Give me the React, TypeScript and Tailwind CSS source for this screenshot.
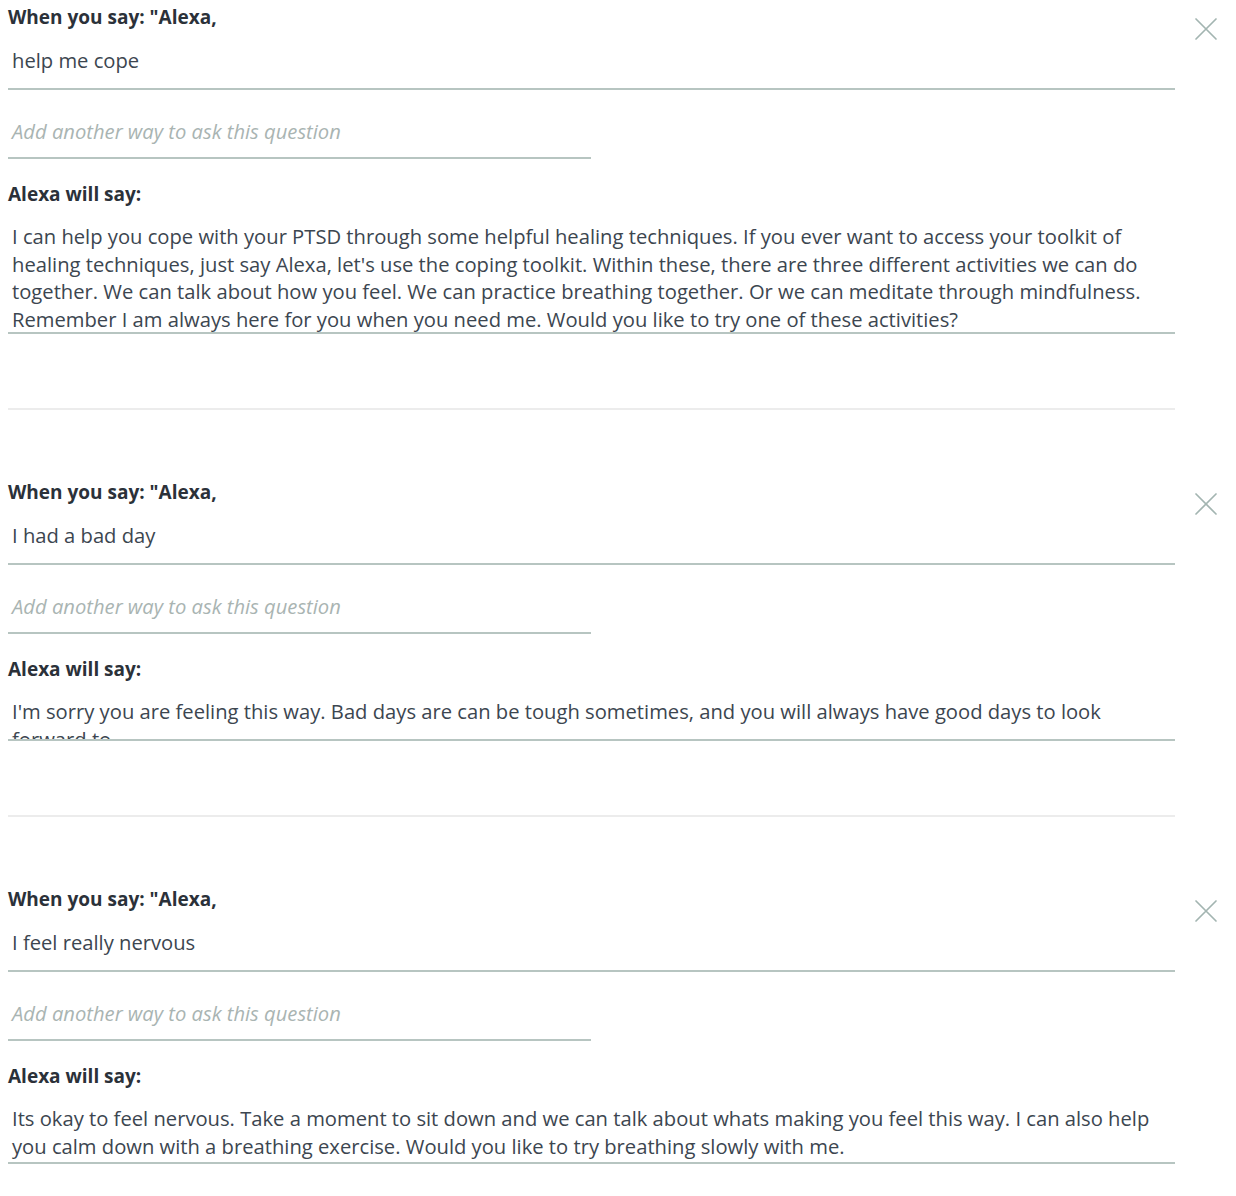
interface Phrase {
  utterance: string;
  reply: string[];
  replyHeight: string;
}

const phrases: Phrase[] = [
  {
    utterance: "help me cope",
    reply: [
      "I can help you cope with your PTSD through some helpful healing techniques. If you ever want to access your toolkit of",
      "healing techniques, just say Alexa, let's use the coping toolkit. Within these, there are three different activities we can do",
      "together. We can talk about how you feel. We can practice breathing together. Or we can meditate through mindfulness.",
      "Remember I am always here for you when you need me. Would you like to try one of these activities?",
    ],
    replyHeight: "h-[109px]",
  },
  {
    utterance: "I had a bad day",
    reply: [
      "I'm sorry you are feeling this way. Bad days are can be tough sometimes, and you will always have good days to look",
      "forward to",
    ],
    replyHeight: "h-[41px]",
  },
  {
    utterance: "I feel really nervous",
    reply: [
      "Its okay to feel nervous. Take a moment to sit down and we can talk about whats making you feel this way. I can also help",
      "you calm down with a breathing exercise. Would you like to try breathing slowly with me.",
    ],
    replyHeight: "h-[57px]",
  },
];

function CloseIcon() {
  return (
    <svg width="24" height="24" viewBox="0 0 24 24" className="text-[#a3b5b1]">
      <path d="M2 2 L22 22 M22 2 L2 22" stroke="currentColor" strokeWidth="1.7" strokeLinecap="round" />
    </svg>
  );
}

function PhraseCard({ phrase, last }: { phrase: Phrase; last: boolean }) {
  return (
    <div className="flex flex-row">
      <div className="ml-2 w-[1167px]">
        <div className="h-[34px] text-[19px] font-bold leading-[34px] text-[#2b3139]">
          When you say: "Alexa,
        </div>
        <div className="border-b-2 border-[#b7c5c1] pt-3 pb-[14px] pl-1 text-[20.2px] leading-[28px] text-[#3c4650]">
          {phrase.utterance}
        </div>
        <div className="w-[583px] border-b-2 border-[#b7c5c1] pt-[27px] pb-3 pl-1 text-[20.2px] italic leading-[28px] text-[#a9b4b2]">
          Add another way to ask this question
        </div>
        <div className="mt-[18px] h-[34px] text-[19px] font-bold leading-[34px] text-[#2b3139]">
          Alexa will say:
        </div>
        <div
          className={`mt-3 ${phrase.replyHeight} box-content overflow-hidden border-b-2 border-[#b7c5c1] pl-1 text-[20.2px] leading-[27.5px] text-[#3c4650]`}
        >
          {phrase.reply.map((line) => (
            <div key={line} className="whitespace-nowrap">
              {line}
            </div>
          ))}
        </div>
        {!last && <div className="mt-[74px] mb-[65px] h-[2px] bg-[#ececec]" />}
      </div>
      <div className="ml-[19px] pt-[17px]">
        <CloseIcon />
      </div>
    </div>
  );
}

export default function App() {
  return (
    <div className="h-[1196px] w-[1236px] bg-white font-['Open_Sans',sans-serif]">
      {phrases.map((p, i) => (
        <PhraseCard key={p.utterance} phrase={p} last={i === phrases.length - 1} />
      ))}
    </div>
  );
}
